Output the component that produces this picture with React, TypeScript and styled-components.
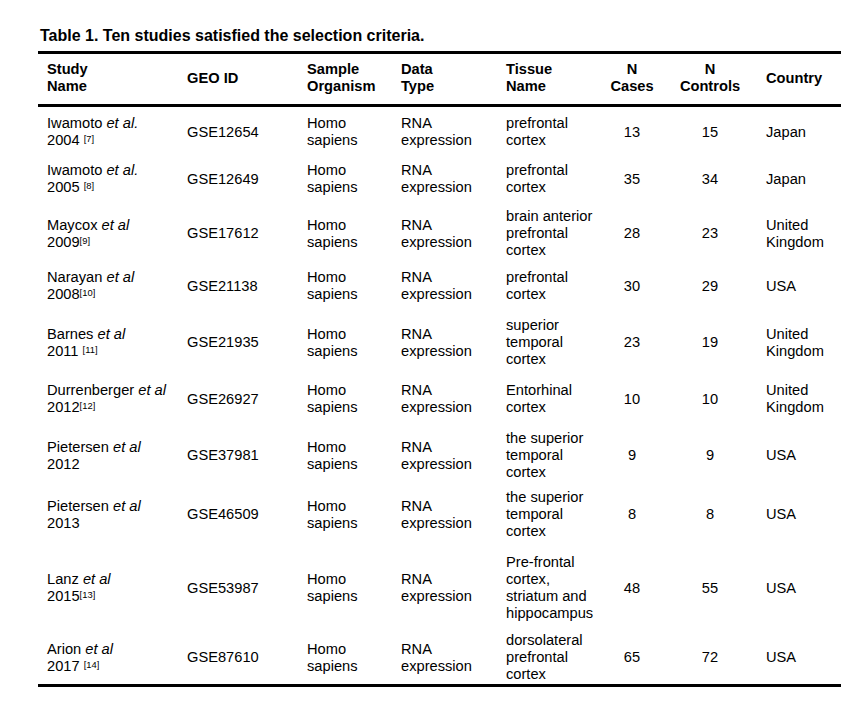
import React from 'react';
import styled, { createGlobalStyle } from 'styled-components';

const GlobalStyle = createGlobalStyle`
  html, body {
    margin: 0;
    padding: 0;
    background: #fff;
  }
  body {
    font-family: "Liberation Sans", Arial, sans-serif;
    color: #000;
  }
`;

const Page = styled.div`
  width: 803px;
  margin-left: 38px;
  padding-top: 27px;
`;

const Caption = styled.h1`
  margin: 0 0 6px;
  padding-left: 2px;
  font-size: 16px;
  line-height: 18px;
  font-weight: 700;
`;

const Table = styled.div`
  border-top: 3px solid #000;
  border-bottom: 3px solid #000;
`;

const COLUMNS = '140px 120px 94px 105px 96px 78px 78px 92px';

const HeaderRow = styled.div`
  display: grid;
  grid-template-columns: ${COLUMNS};
  align-items: center;
  padding: 7px 0 9px;
  border-bottom: 3px solid #000;
  font-weight: 700;
`;

const BodyRow = styled.div<{ $pb: number }>`
  display: grid;
  grid-template-columns: ${COLUMNS};
  align-items: center;
  padding: 8px 0 ${(p) => p.$pb}px;
`;

const Cell = styled.div<{ $align: 'left' | 'center'; $pl: number }>`
  font-size: 14.67px;
  line-height: 17px;
  text-align: ${(p) => p.$align};
  padding-left: ${(p) => p.$pl}px;
  white-space: nowrap;
`;

const Etal = styled.i`
  font-style: italic;
`;

const Ref = styled.sup`
  font-size: 9.4px;
  line-height: 0;
  vertical-align: 3px;
`;

type Col = { align: 'left' | 'center'; pl: number };

const cols: Col[] = [
  { align: 'left', pl: 9 },
  { align: 'left', pl: 9 },
  { align: 'left', pl: 9 },
  { align: 'left', pl: 9 },
  { align: 'left', pl: 9 },
  { align: 'center', pl: 0 },
  { align: 'center', pl: 0 },
  { align: 'left', pl: 17 },
];

const headers: string[][] = [
  ['Study', 'Name'],
  ['GEO ID'],
  ['Sample', 'Organism'],
  ['Data', 'Type'],
  ['Tissue', 'Name'],
  ['N', 'Cases'],
  ['N', 'Controls'],
  ['Country'],
];

type Study = {
  name: string;
  etal: string;
  year: string;
  refNo?: string;
  gap?: boolean;
  geo: string;
  tissue: string[];
  cases: string;
  controls: string;
  country: string[];
  pb: number;
};

const studies: Study[] = [
  { name: 'Iwamoto', etal: 'et al.', year: '2004', refNo: '[7]', gap: true, geo: 'GSE12654', tissue: ['prefrontal', 'cortex'], cases: '13', controls: '15', country: ['Japan'], pb: 5 },
  { name: 'Iwamoto', etal: 'et al.', year: '2005', refNo: '[8]', gap: true, geo: 'GSE12649', tissue: ['prefrontal', 'cortex'], cases: '35', controls: '34', country: ['Japan'], pb: 4 },
  { name: 'Maycox', etal: 'et al', year: '2009', refNo: '[9]', geo: 'GSE17612', tissue: ['brain anterior', 'prefrontal', 'cortex'], cases: '28', controls: '23', country: ['United', 'Kingdom'], pb: 2 },
  { name: 'Narayan', etal: 'et al', year: '2008', refNo: '[10]', geo: 'GSE21138', tissue: ['prefrontal', 'cortex'], cases: '30', controls: '29', country: ['USA'], pb: 6 },
  { name: 'Barnes', etal: 'et al', year: '2011', refNo: '[11]', gap: true, geo: 'GSE21935', tissue: ['superior', 'temporal', 'cortex'], cases: '23', controls: '19', country: ['United', 'Kingdom'], pb: 6 },
  { name: 'Durrenberger', etal: 'et al', year: '2012', refNo: '[12]', geo: 'GSE26927', tissue: ['Entorhinal', 'cortex'], cases: '10', controls: '10', country: ['United', 'Kingdom'], pb: 6 },
  { name: 'Pietersen', etal: 'et al', year: '2012', geo: 'GSE37981', tissue: ['the superior', 'temporal', 'cortex'], cases: '9', controls: '9', country: ['USA'], pb: 0 },
  { name: 'Pietersen', etal: 'et al', year: '2013', geo: 'GSE46509', tissue: ['the superior', 'temporal', 'cortex'], cases: '8', controls: '8', country: ['USA'], pb: 6 },
  { name: 'Lanz', etal: 'et al', year: '2015', refNo: '[13]', geo: 'GSE53987', tissue: ['Pre-frontal', 'cortex,', 'striatum and', 'hippocampus'], cases: '48', controls: '55', country: ['USA'], pb: 2 },
  { name: 'Arion', etal: 'et al', year: '2017', refNo: '[14]', gap: true, geo: 'GSE87610', tissue: ['dorsolateral', 'prefrontal', 'cortex'], cases: '65', controls: '72', country: ['USA'], pb: 1 },
];

const Lines: React.FC<{ lines: string[] }> = ({ lines }) => (
  <>
    {lines.map((l, i) => (
      <React.Fragment key={i}>
        {i > 0 && <br />}
        {l}
      </React.Fragment>
    ))}
  </>
);

const App: React.FC = () => {
  return (
    <>
      <GlobalStyle />
      <Page>
        <Caption>Table 1. Ten studies satisfied the selection criteria.</Caption>
        <Table>
          <HeaderRow>
            {headers.map((h, i) => (
              <Cell key={i} $align={cols[i].align} $pl={cols[i].pl}>
                <Lines lines={h} />
              </Cell>
            ))}
          </HeaderRow>
          {studies.map((s, r) => {
            const cells: React.ReactNode[] = [
              <>
                {s.name} <Etal>{s.etal}</Etal>
                <br />
                {s.year}
                {s.refNo && (
                  <>
                    {s.gap ? ' ' : ''}
                    <Ref>{s.refNo}</Ref>
                  </>
                )}
              </>,
              s.geo,
              <Lines lines={['Homo', 'sapiens']} />,
              <Lines lines={['RNA', 'expression']} />,
              <Lines lines={s.tissue} />,
              s.cases,
              s.controls,
              <Lines lines={s.country} />,
            ];
            return (
              <BodyRow key={r} $pb={s.pb}>
                {cells.map((c, i) => (
                  <Cell key={i} $align={cols[i].align} $pl={cols[i].pl}>
                    {c}
                  </Cell>
                ))}
              </BodyRow>
            );
          })}
        </Table>
      </Page>
    </>
  );
};

export default App;
